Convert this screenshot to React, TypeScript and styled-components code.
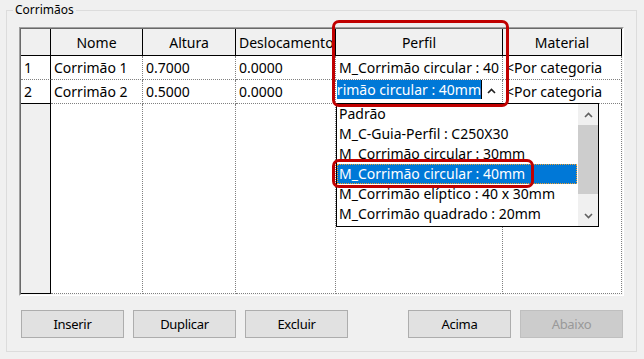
import React from "react";
import styled, { createGlobalStyle, css } from "styled-components";

const GlobalStyle = createGlobalStyle`
  html, body { margin: 0; padding: 0; background: #f0f0f0; }
  body { font-family: "Noto Sans", "Open Sans", sans-serif; }
  * { box-sizing: border-box; }
`;

const Page = styled.div`
  position: relative;
  width: 644px;
  height: 359px;
  padding: 3px 7px 0 6px;
  background: #f0f0f0;
  overflow: hidden;
`;

const GroupBox = styled.fieldset`
  margin: 0;
  width: 631px;
  border: 1px solid #dcdcdc;
  padding: 10px 12px 13px 12px;
  min-width: 0;
`;

const Legend = styled.legend`
  font: 12px/14px "Noto Sans", sans-serif;
  color: #000;
  padding: 0 2px;
  margin-left: -6px;
`;

const GridFrame = styled.div`
  height: 269px;
  border: 1px solid;
  border-color: #a0a0a0 #ffffff #ffffff #a0a0a0;
`;

const GridInner = styled.div`
  height: 100%;
  border: 1px solid;
  border-color: #696969 #f7f7f7 #f7f7f7 #696969;
`;

const Table = styled.div`
  display: grid;
  grid-template-columns: 30px 92px 93px 100px 167px 119px;
  grid-template-rows: 27px 24px 24px 1fr;
  height: 100%;
  background: #fff;
  font: 14px "Noto Sans", sans-serif;
  color: #000;
`;

const cellBase = css`
  overflow: hidden;
  white-space: nowrap;
  display: flex;
  align-items: center;
`;

const Corner = styled.div`
  ${cellBase};
  background: #f0f0f0;
  border-right: 1px solid #000;
  border-bottom: 1px solid #000;
`;

const HeaderCell = styled.div<{ $align?: "left" | "center" }>`
  ${cellBase};
  background: #f0f0f0;
  border-right: 1px solid #000;
  border-bottom: 1px solid #000;
  justify-content: ${(p) => (p.$align === "left" ? "flex-start" : "center")};
  padding-left: ${(p) => (p.$align === "left" ? "3px" : "0")};
`;

const RowHeader = styled.div<{ $last?: boolean }>`
  ${cellBase};
  background: #fff;
  padding-left: 3px;
  border-right: 1px solid #000;
  border-bottom: 1px ${(p) => (p.$last ? "solid #000" : "dotted #808080")};
`;

const RowHeaderFill = styled.div`
  background: #f0f0f0;
  border-right: 1px solid #000;
  border-bottom: 1px solid #000;
`;

const DataCell = styled.div`
  ${cellBase};
  padding-left: 3px;
  border-right: 1px dotted #808080;
  border-bottom: 1px dotted #808080;
`;

const DataFill = styled.div`
  border-right: 1px dotted #808080;
  border-bottom: 1px dotted #808080;
`;

const EditCell = styled.div`
  position: relative;
  display: flex;
  align-items: flex-start;
  padding-left: 2px;
  border-right: 1px dotted #808080;
  border-bottom: 1px dotted #808080;
`;

const EditField = styled.div`
  width: 143px;
  height: 19px;
  display: flex;
  justify-content: flex-end;
  flex: none;
`;

const Selection = styled.span`
  flex: none;
  white-space: nowrap;
  line-height: 19px;
  background: #0078d7;
  color: #fff;
`;

const Caret = styled.span`
  flex: none;
  width: 1px;
  height: 19px;
  background: #000;
`;

const ComboArrow = styled.span`
  flex: none;
  display: flex;
  align-items: center;
  height: 22px;
  margin-left: 5px;
`;

const DropList = styled.div`
  position: absolute;
  left: 0;
  top: 23px;
  width: 263px;
  height: 124px;
  border: 1px solid #000;
  background: #fff;
  display: flex;
  z-index: 2;
`;

const Items = styled.ul`
  flex: 1;
  margin: 0;
  padding: 0;
  list-style: none;
  overflow: hidden;
`;

const Item = styled.li<{ $selected?: boolean }>`
  height: 20px;
  line-height: 20px;
  padding-left: 2px;
  white-space: nowrap;
  overflow: hidden;
  color: #000;
  ${(p) =>
    p.$selected &&
    css`
      background: #0078d7;
      color: #fff;
      outline: 1px dotted #f0a030;
      outline-offset: -1px;
      margin-right: 1px;
    `}
`;

const ScrollBar = styled.div`
  width: 20px;
  background: #f0f0f0;
  display: flex;
  flex-direction: column;
`;

const ScrollArrow = styled.div<{ $h: number }>`
  height: ${(p) => p.$h}px;
  display: flex;
  align-items: center;
  justify-content: center;
  flex: none;
`;

const Thumb = styled.div`
  height: 69px;
  background: #cdcdcd;
  flex: none;
`;

const Track = styled.div`
  flex: 1;
`;

const ButtonRow = styled.div`
  display: flex;
  gap: 9px;
  margin-top: 14px;
  padding: 0 1px 0 2px;
`;

const Button = styled.button<{ $push?: boolean }>`
  width: 103px;
  height: 28px;
  border: 1px solid #adadad;
  background: #e1e1e1;
  font: 13px "Noto Sans", sans-serif;
  letter-spacing: -0.3px;
  color: #000;
  padding: 0;
  margin-left: ${(p) => (p.$push ? "auto" : "0")};
  &:disabled {
    background: #cccccc;
    border-color: #bfbfbf;
    color: #999;
  }
`;

const Highlight = styled.div<{ $x: number; $y: number; $w: number; $h: number }>`
  position: absolute;
  left: ${(p) => p.$x}px;
  top: ${(p) => p.$y}px;
  width: ${(p) => p.$w}px;
  height: ${(p) => p.$h}px;
  border: 3px solid #c00000;
  border-radius: 7px;
  pointer-events: none;
  z-index: 5;
`;

const Chevron = ({ up, color, w = 9, h = 6 }: { up: boolean; color: string; w?: number; h?: number }) => (
  <svg width={w} height={h} viewBox="0 0 9 6" fill="none">
    <path
      d={up ? "M1 5 L4.5 1.5 L8 5" : "M1 1 L4.5 4.5 L8 1"}
      stroke={color}
      strokeWidth={1.6}
    />
  </svg>
);

const profiles = [
  "Padrão",
  "M_C-Guia-Perfil : C250X30",
  "M_Corrimão circular : 30mm",
  "M_Corrimão circular : 40mm",
  "M_Corrimão elíptico : 40 x 30mm",
  "M_Corrimão quadrado : 20mm",
];

export default function App() {
  return (
    <Page>
      <GlobalStyle />
      <GroupBox>
        <Legend>Corrimãos</Legend>
        <GridFrame>
          <GridInner>
            <Table>
              <Corner />
              <HeaderCell>Nome</HeaderCell>
              <HeaderCell>Altura</HeaderCell>
              <HeaderCell $align="left">Deslocamento</HeaderCell>
              <HeaderCell>Perfil</HeaderCell>
              <HeaderCell>Material</HeaderCell>

              <RowHeader>1</RowHeader>
              <DataCell>Corrimão 1</DataCell>
              <DataCell>0.7000</DataCell>
              <DataCell>0.0000</DataCell>
              <DataCell>M_Corrimão circular : 40</DataCell>
              <DataCell>&lt;Por categoria</DataCell>

              <RowHeader $last>2</RowHeader>
              <DataCell>Corrimão 2</DataCell>
              <DataCell>0.5000</DataCell>
              <DataCell>0.0000</DataCell>
              <EditCell>
                <EditField>
                  <Selection>rimão circular : 40mm</Selection>
                </EditField>
                <Caret />
                <ComboArrow>
                  <Chevron up color="#222" />
                </ComboArrow>
                <DropList>
                  <Items>
                    {profiles.map((p, i) => (
                      <Item key={p} $selected={i === 3}>
                        {p}
                      </Item>
                    ))}
                  </Items>
                  <ScrollBar>
                    <ScrollArrow $h={21}>
                      <Chevron up color="#606060" />
                    </ScrollArrow>
                    <Thumb />
                    <Track />
                    <ScrollArrow $h={20}>
                      <Chevron up={false} color="#606060" />
                    </ScrollArrow>
                  </ScrollBar>
                </DropList>
              </EditCell>
              <DataCell>&lt;Por categoria</DataCell>

              <RowHeaderFill />
              <DataFill />
              <DataFill />
              <DataFill />
              <DataFill />
              <DataFill />
            </Table>
          </GridInner>
        </GridFrame>
        <ButtonRow>
          <Button>Inserir</Button>
          <Button>Duplicar</Button>
          <Button>Excluir</Button>
          <Button $push>Acima</Button>
          <Button disabled>Abaixo</Button>
        </ButtonRow>
      </GroupBox>
      <Highlight $x={332} $y={20} $w={177} $h={87} />
      <Highlight $x={332} $y={159} $w={202} $h={29} />
    </Page>
  );
}
